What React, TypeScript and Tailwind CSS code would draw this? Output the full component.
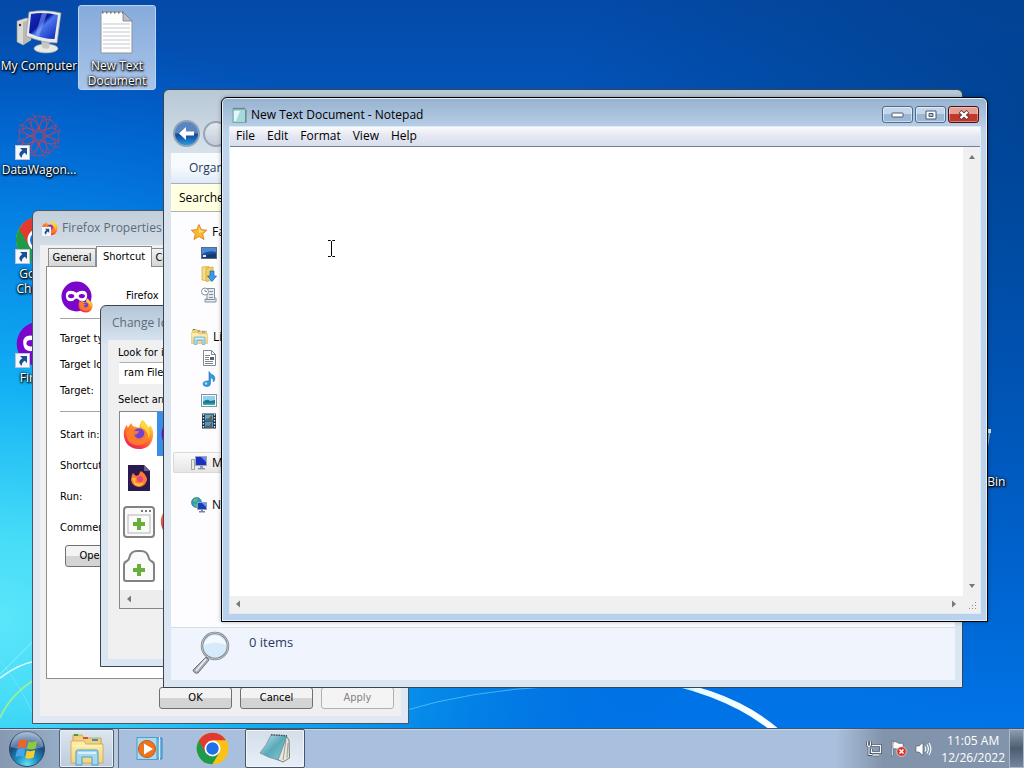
import React from "react";

const ui = "font-['Open_Sans','Noto_Sans',sans-serif]";
const dlg = "font-['DejaVu_Sans_Condensed','Noto_Sans',sans-serif]";

/* ---------- drawings ---------- */

function Wallpaper() {
  return (
    <svg className="absolute inset-0 h-full w-full" viewBox="0 0 1024 768" preserveAspectRatio="none" aria-hidden="true">
      <defs>
        <linearGradient id="sky" x1="0" y1="0" x2="0" y2="1">
          <stop offset="0" stopColor="#054aa8" />
          <stop offset="0.2" stopColor="#005ac4" />
          <stop offset="0.55" stopColor="#0066d8" />
          <stop offset="1" stopColor="#0076ea" />
        </linearGradient>
        <radialGradient id="glow" gradientUnits="userSpaceOnUse" cx="0" cy="0" r="1" gradientTransform="translate(0 620) scale(680 590)">
          <stop offset="0" stopColor="#5be6fa" />
          <stop offset="0.14" stopColor="#46dcf8" />
          <stop offset="0.4" stopColor="#12b0f4" />
          <stop offset="0.68" stopColor="#0588e8" stopOpacity="0.85" />
          <stop offset="1" stopColor="#0068dc" stopOpacity="0" />
        </radialGradient>
        <radialGradient id="shade" gradientUnits="userSpaceOnUse" cx="0" cy="0" r="1" gradientTransform="translate(1024 130) scale(460 600)">
          <stop offset="0" stopColor="#003e88" stopOpacity="0.75" />
          <stop offset="1" stopColor="#003e88" stopOpacity="0" />
        </radialGradient>
        <linearGradient id="arc" x1="0" y1="0" x2="1" y2="0">
          <stop offset="0" stopColor="#bff2ff" stopOpacity="0" />
          <stop offset="0.4" stopColor="#e8fbff" />
          <stop offset="1" stopColor="#ffffff" />
        </linearGradient>
      </defs>
      <rect width="1024" height="768" fill="url(#sky)" />
      <rect width="1024" height="768" fill="url(#shade)" />
      <rect width="1024" height="768" fill="url(#glow)" />
      <path d="M640 676 Q730 686 780 730 L770 730 Q722 692 640 679Z" fill="url(#arc)" />
      <path d="M400 712 Q470 690 560 686" fill="none" stroke="#6fd6ff" strokeOpacity="0.6" />
      <path d="M0 678 Q18 664 36 661" fill="none" stroke="#d8fbff" strokeWidth="1.6" />
      <path d="M0 674 Q20 655 34 640" fill="none" stroke="#b8f4ff" strokeOpacity="0.7" />
      <path d="M0 718 Q10 695 34 680" fill="none" stroke="#9ff08e" strokeWidth="1.6" />
      <path d="M0 660 Q20 685 34 716" fill="none" stroke="#8eeaff" strokeOpacity="0.5" />
    </svg>
  );
}

function ComputerIcon() {
  return (
    <svg width="48" height="44" viewBox="0 0 48 44" aria-hidden="true">
      <defs>
        <linearGradient id="scr" x1="0" y1="0" x2="1" y2="1">
          <stop offset="0" stopColor="#1a2fc0" />
          <stop offset="0.4" stopColor="#0a18a0" />
          <stop offset="0.5" stopColor="#4a78ee" />
          <stop offset="1" stopColor="#0a20b8" />
        </linearGradient>
      </defs>
      <path d="M2 11 L11 8 L16 9 V30 L8 35 L2 32Z" fill="#d9dad6" stroke="#8e908c" strokeWidth="0.6" />
      <path d="M8 12 L16 9 V30 L8 35Z" fill="#b9bab6" />
      <circle cx="5" cy="15" r="1.2" fill="#333" />
      <ellipse cx="31" cy="38.500" rx="12" ry="4.5" fill="#e8e9e6" stroke="#9a9c98" strokeWidth="0.7" />
      <path d="M26 28 L35 30 L34 38 Q30 40 27 37Z" fill="#c6c7c3" />
      <path d="M14 2 Q30 -1 46 3 L42 33 Q28 33 11 26Z" fill="#e9eae8" stroke="#989a97" strokeWidth="0.7" />
      <path d="M16 4 Q29 1.5 43 5 L39.500 29 Q27 29 14 23Z" fill="url(#scr)" />
      <path d="M27 3 L32 3 L24 27 L20 26Z" fill="#8db0ff" opacity="0.5" />
    </svg>
  );
}

function TextFileIcon() {
  return (
    <svg width="36" height="46" viewBox="0 0 36 46" aria-hidden="true">
      <path d="M2 3 H24 L33 12 V44 H2Z" fill="#fdfdfd" stroke="#8f9499" />
      <path d="M24 3 V12 H33Z" fill="#b9bfc6" stroke="#777c82" strokeWidth="0.8" />
      <path d="M3 3.500 H24" stroke="#6a7077" strokeWidth="2" strokeDasharray="1.500 2.500" />
      {[15, 19, 23, 27, 31, 35, 39].map((y) => (
        <path key={y} d={`M4 ${y}H31`} stroke="#c3c8ce" strokeWidth="1" />
      ))}
    </svg>
  );
}

function ShortcutArrow() {
  return (
    <svg className="absolute bottom-0 left-0" width="15" height="15" viewBox="0 0 15 15" aria-hidden="true">
      <rect x="0.500" y="0.500" width="14" height="14" fill="#f4f8fc" stroke="#b9c4d0" />
      <path d="M5 3 H12 V10 L9.700 7.700 Q6.500 9.500 6.800 13 Q1.500 9 7.300 5.300Z" fill="#1b5191" />
    </svg>
  );
}

function WagonIcon() {
  return (
    <svg width="48" height="48" viewBox="0 0 48 48" fill="none" stroke="#e23a4c" strokeWidth="0.8" opacity="0.85" aria-hidden="true">
      {[0, 45, 90, 135, 180, 225, 270, 315].map((a) => (
        <g key={a} transform={`rotate(${a} 24 24)`}>
          <circle cx="24" cy="12" r="8" />
          <path d="M24 17 L29 2 M24 17 L19 2 M19 2 L14 7" strokeDasharray="3 1" />
        </g>
      ))}
      <circle cx="24" cy="24" r="7" />
    </svg>
  );
}

function ChromeIcon({ size }: { size: number }) {
  return (
    <svg width={size} height={size} viewBox="0 0 48 48" aria-hidden="true">
      <circle cx="24" cy="24" r="23" fill="#fbc116" />
      <path d="M24 24 L4.080 12.500 A23 23 0 0 0 24 47 L34 30Z" fill="#1f9a4c" />
      <path d="M4.080 12.500 A23 23 0 0 1 43.920 12.500 H24 L14 30Z" fill="#e03b2e" />
      <path d="M24 12.500 H43.920 A23 23 0 0 1 24 47 L34 30Z" fill="#fbc116" />
      <circle cx="24" cy="24" r="11.500" fill="#fff" />
      <circle cx="24" cy="24" r="9" fill="#1f6fe5" />
    </svg>
  );
}

function FirefoxIcon({ size, id }: { size: number; id: string }) {
  return (
    <svg width={size} height={size} viewBox="0 0 32 32" aria-hidden="true">
      <defs>
        <linearGradient id={id} x1="0.8" y1="0" x2="0.2" y2="1">
          <stop offset="0" stopColor="#fff04a" />
          <stop offset="0.35" stopColor="#ff9a2a" />
          <stop offset="0.7" stopColor="#ff4a3a" />
          <stop offset="1" stopColor="#e01a70" />
        </linearGradient>
      </defs>
      <path d="M20 1 Q25 5 26 9 Q28 8 28 6 Q32 12 31 18 Q29 31 16 31 Q3 30 1 18 Q0 11 4 6 L5 9 Q7 5 9 4 Q9 7 12 8 L17 9 Q17 4 20 1Z" fill={`url(#${id})`} />
      <circle cx="16.500" cy="16" r="6.500" fill="#7340d6" />
      <path d="M3 13 Q8 9 12 12 Q15 12 17 13 Q15 16 12 16.500 Q13 20 17 20 Q22 19 22 14 Q21 11 19 9 Q27 11 26 19 Q24 27 16 27 Q6 27 4 19Z" fill="#ff8226" opacity="0.85" />
      <path d="M20 1 Q25 5 26 10 Q29 15 26 20 Q27 13 20 9 Q16 6 20 1Z" fill="#ffd83c" />
    </svg>
  );
}

function MaskIcon({ size, badge, id }: { size: number; badge?: boolean; id: string }) {
  return (
    <span className="relative block">
      <svg width={size} height={size} viewBox="0 0 32 32" aria-hidden="true">
        <circle cx="16" cy="16" r="15.500" fill="#7a06cc" />
        <path d="M5 15 Q5 10 10 10 Q13 10 16 12 Q19 10 22 10 Q27 10 27 15 Q27 21 22 21 Q19 21 17.500 18.500 Q16 17.500 14.500 18.500 Q13 21 10 21 Q5 21 5 15Z" fill="#fff" />
        <ellipse cx="10.500" cy="15.500" rx="3.200" ry="2.200" fill="#7a06cc" />
        <ellipse cx="21.500" cy="15.500" rx="3.200" ry="2.200" fill="#7a06cc" />
      </svg>
      {badge && (
        <span className="absolute -right-px -bottom-px">
          <FirefoxIcon size={15} id={id} />
        </span>
      )}
    </span>
  );
}

function PrivateFileIcon() {
  return (
    <svg width="24" height="28" viewBox="0 0 24 28" aria-hidden="true">
      <path d="M1 1 H17 L23 7 V27 H1Z" fill="#2a1a50" />
      <path d="M17 1 L23 7 H17Z" fill="#6d5c98" />
      <path d="M14 7 Q20 11 20 16 Q18 23 12 23 Q5 22 4 16 Q4 12 6 9 L9 12 L12 11 Q12 9 14 7Z" fill="#ff7a2c" />
      <path d="M5 14 L9 14 L8 18 Q12 21 17 18 Q14 24 8 21Z" fill="#ffc43a" />
      <circle cx="13" cy="15" r="3" fill="#e8408a" />
    </svg>
  );
}

function NewWindowIcon() {
  return (
    <svg width="32" height="32" viewBox="0 0 32 32" fill="none" aria-hidden="true">
      <rect x="1" y="1" width="30" height="30" rx="3" fill="#fafafa" stroke="#828282" strokeWidth="2" />
      <path d="M18 5h2M22 5h2M26 5h2" stroke="#777" strokeWidth="2" />
      <rect x="5" y="9" width="22" height="18" stroke="#b4b4b4" />
      <path d="M16 12v12M10 18h12" stroke="#69ad3a" strokeWidth="4" />
    </svg>
  );
}

function NewTabIcon() {
  return (
    <svg width="32" height="32" viewBox="0 0 32 32" fill="none" aria-hidden="true">
      <path d="M1 29 V15 Q1 12 4 11 Q6 10 6.500 7 Q8 1 14 1 H18 Q24 1 25.500 7 Q26 10 28 11 Q31 12 31 15 V29 Q31 31 29 31 H3 Q1 31 1 29Z" fill="#fafafa" stroke="#828282" strokeWidth="2" />
      <path d="M16 14v12M10 20h12" stroke="#69ad3a" strokeWidth="4" />
    </svg>
  );
}

function StarIcon() {
  return (
    <svg width="16" height="16" viewBox="0 0 16 16" aria-hidden="true">
      <path d="M8 0.500 L10.300 5.600 L15.700 6.200 L11.700 9.900 L13 15.500 L8 12.500 L3 15.500 L4.300 9.900 L0.300 6.200 L5.700 5.600Z" fill="#fdb92c" stroke="#d6761c" strokeWidth="0.8" />
      <path d="M8 3 L9.500 6.600 L13 7 L8 9Z" fill="#ffe27a" />
    </svg>
  );
}

function DesktopIcon() {
  return (
    <svg width="16" height="16" viewBox="0 0 16 16" aria-hidden="true">
      <rect x="0.500" y="2.500" width="15" height="11" fill="#1d50a0" stroke="#5c6b80" />
      <path d="M1 3 H15 V7 Q8 5 1 9Z" fill="#4b8bd8" />
      <path d="M1 13 Q7 8 15 9 V13Z" fill="#173a6a" />
      <path d="M2 10h3v2H2z" fill="#d9ecff" />
    </svg>
  );
}

function DownloadsIcon() {
  return (
    <svg width="16" height="16" viewBox="0 0 16 16" aria-hidden="true">
      <path d="M1 1 L8 0.500 V15 L1 14Z" fill="#f8dd7c" stroke="#c9a545" strokeWidth="0.7" />
      <path d="M5 2 L12 1 V14 L5 15.500Z" fill="#f3cf60" stroke="#c9a545" strokeWidth="0.7" />
      <path d="M9 5 H13 V10 H15.500 L11 15.500 L6.500 10 H9Z" fill="#3c9be8" stroke="#1a62b4" strokeWidth="0.7" />
    </svg>
  );
}

function RecentIcon() {
  return (
    <svg width="16" height="16" viewBox="0 0 16 16" fill="none" stroke="#83909c" aria-hidden="true">
      <path d="M6 1.500 H13.500 V11 H15 V15 H4 V12 H6Z" fill="#e6eaee" />
      <circle cx="4" cy="4.500" r="3.500" fill="#fff" />
      <path d="M4 2.500 V4.500 H6 M8.500 4.500 H12 M8 7.500 H12 M8 10.500 H12 M5 12.500 H14" />
    </svg>
  );
}

function LibraryIcon({ size }: { size: number }) {
  return (
    <svg width={size} height={size} viewBox="0 0 34 34" aria-hidden="true">
      <defs>
        <linearGradient id="fold" x1="0" y1="0" x2="0" y2="1">
          <stop offset="0" stopColor="#fff0a8" />
          <stop offset="1" stopColor="#f2d47c" />
        </linearGradient>
      </defs>
      <path d="M3 6 V3 H12 L14 6 H31 V24 H3Z" fill="#f0d27e" stroke="#c29a45" strokeWidth="0.8" />
      <path d="M4 2h4v2H4z" fill="#3f9c4a" />
      <path d="M13 5h5v2h-5z" fill="#d3532a" />
      <path d="M22 7h6v2h-6z" fill="#3c8ad0" />
      <path d="M1 9 H14 L16 12 H33 V31 H1Z" fill="url(#fold)" stroke="#cfa34c" strokeWidth="0.8" />
      <path d="M3 14 H31" stroke="#fff8d8" />
      <path d="M6 33 V20 Q6 18 8 18 H26 Q28 18 28 20 V33 H22 V25 H12 V33Z" fill="#a4d8f2" stroke="#4d9cc8" strokeWidth="1" />
      <path d="M8 21 H26" stroke="#e9faff" strokeWidth="1.5" />
    </svg>
  );
}

function DocumentIcon() {
  return (
    <svg width="16" height="16" viewBox="0 0 16 16" fill="none" aria-hidden="true">
      <path d="M2.500 0.500 H10.500 L14.500 4.500 V15.500 H2.500Z" fill="#fff" stroke="#80878f" />
      <path d="M10.500 0.500 V4.500 H14.500 M4 5.500 H9 M4 7.500 H8 M4 9.500 H8 M4 11.500 H12 M4 13.500 H12" stroke="#7d858d" />
      <path d="M9 7h4v3H9z" fill="#56616d" />
    </svg>
  );
}

function MusicIcon() {
  return (
    <svg width="16" height="16" viewBox="0 0 16 16" aria-hidden="true">
      <path d="M8 0.500 Q9 3 12 4 Q15.500 7 12.500 11 Q13 7.500 9.500 6.500 V12 Q9.500 15.500 6 15.500 Q2 15.500 2 12.800 Q2.500 9.500 8 10Z" fill="#2f9bdc" stroke="#1a6fb0" strokeWidth="0.6" />
      <circle cx="5" cy="12.500" r="1.200" fill="#a9e0ff" />
    </svg>
  );
}

function PictureIcon() {
  return (
    <svg width="16" height="16" viewBox="0 0 16 16" aria-hidden="true">
      <rect x="0.500" y="2.500" width="15" height="12" fill="#fff" stroke="#7c95a8" />
      <rect x="2" y="4" width="12" height="9" fill="#8fd2ee" />
      <path d="M2 10 Q6 6 9 9 L14 8 V13 H2Z" fill="#1f7a90" />
      <path d="M2 11.500 H14 V13 H2Z" fill="#35b0b4" />
    </svg>
  );
}

function VideoIcon() {
  return (
    <svg width="16" height="16" viewBox="0 0 16 16" aria-hidden="true">
      <rect x="1" y="0.500" width="14" height="15" fill="#20303c" />
      <path d="M2.500 1 V15 M13.500 1 V15" stroke="#dfe8ee" strokeWidth="1.400" strokeDasharray="1.500 1.500" />
      <path d="M4 1.500h8v6H4z" fill="#58a8d4" />
      <path d="M4 8.500h8v6H4z" fill="#4898c8" />
      <path d="M5 5 L7 6 L11 2 V7 H5Z M5 12 L8 13 L11 9 V14 H5Z" fill="#6f5a48" />
    </svg>
  );
}

function SmallComputerIcon() {
  return (
    <svg width="16" height="16" viewBox="0 0 16 16" aria-hidden="true">
      <path d="M0.500 4.500 H3.500 V14.500 H0.500Z" fill="#e5e7e8" stroke="#8b9197" strokeWidth="0.8" />
      <rect x="4.500" y="1.500" width="11" height="9" fill="#1a2ec0" stroke="#a0a8b8" />
      <path d="M10 2 H15 V7Z" fill="#6a8cf0" />
      <path d="M9 11 h3 v2 h2 v1.500 H7 V13 h2z" fill="#9098a4" />
    </svg>
  );
}

function NetworkIcon() {
  return (
    <svg width="16" height="16" viewBox="0 0 16 16" aria-hidden="true">
      <circle cx="5.500" cy="5.500" r="5" fill="#2c9bd0" stroke="#1a5c94" strokeWidth="0.6" />
      <path d="M2 3 Q5 0 7 2 Q6 5 3 5Z M3 7 Q6 6 6 10 Q3 9 3 7Z" fill="#63c255" />
      <rect x="6.500" y="5.500" width="9" height="7" fill="#1a3ac0" stroke="#8fa0b8" />
      <path d="M11 6 H15 V10Z" fill="#6d94f4" />
      <path d="M10 13 h2 v1 h2 v1.500 H8 V14 h2z" fill="#7c8590" />
    </svg>
  );
}

function MagnifierIcon() {
  return (
    <svg width="40" height="44" viewBox="0 0 40 44" aria-hidden="true">
      <path d="M15 26 L18 29 L7 42 Q3 43 2 39Z" fill="#a8acb0" stroke="#73777b" />
      <path d="M15 28 L5 40" stroke="#f1f3f4" strokeWidth="1.500" />
      <circle cx="24" cy="15" r="13" fill="#d5ebfb" stroke="#7b8086" strokeWidth="2.500" />
      <circle cx="24" cy="15" r="13.200" fill="none" stroke="#d8dcdf" strokeWidth="0.8" />
      <path d="M13 14 Q15 5 24 4 Q33 5 35 14 Q24 9 13 14Z" fill="#f2f9ff" />
    </svg>
  );
}

function NotepadSmallIcon() {
  return (
    <svg width="16" height="16" viewBox="0 0 16 16" aria-hidden="true">
      <rect x="1" y="2" width="12.500" height="13.500" fill="#a5dadd" stroke="#6c9ca2" strokeWidth="0.8" />
      <path d="M2 4 H8 L4 14 H2Z" fill="#e2f7f6" />
      <path d="M1.500 1.500 H13.500" stroke="#49636b" strokeWidth="1.500" strokeDasharray="1 1" />
      <path d="M14 3 V15.500" stroke="#4f6c70" strokeWidth="0.8" />
    </svg>
  );
}

function NotepadLargeIcon() {
  return (
    <svg width="32" height="32" viewBox="0 0 32 32" aria-hidden="true">
      <defs>
        <linearGradient id="npd" x1="0" y1="0" x2="1" y2="1">
          <stop offset="0" stopColor="#c4eaf0" />
          <stop offset="0.5" stopColor="#5ba9ba" />
          <stop offset="1" stopColor="#8accd0" />
        </linearGradient>
      </defs>
      <path d="M27 3 L30 7 L30.500 25 L24 29 L17 26Z" fill="#e8e6da" stroke="#5d6258" strokeWidth="0.8" />
      <path d="M27 7 L24 27 M29 10 L28 25" stroke="#8d9183" strokeWidth="0.8" />
      <path d="M12 2 L28 3 Q24 14 19 27 Q10 25 1 20 Q8 12 12 2Z" fill="url(#npd)" stroke="#4d7c84" strokeWidth="0.6" />
      <path d="M12 1.700 L28 2.700" stroke="#3f5458" strokeWidth="1.300" strokeDasharray="1.500 1" />
    </svg>
  );
}

function MediaPlayerIcon() {
  return (
    <svg width="28" height="26" viewBox="0 0 28 26" aria-hidden="true">
      <path d="M15 2 H26 V23 H15Z" fill="#6cb8e2" stroke="#4284b2" />
      <path d="M23.500 1 V24" stroke="#d9f1fc" />
      <rect x="1" y="1.500" width="20" height="22" fill="#a8daf0" stroke="#579cc4" />
      <circle cx="11" cy="13" r="8.500" fill="#ee7420" stroke="#c8560f" />
      <path d="M8 7.500 L17 13 L8 18.500Z" fill="#fff" />
    </svg>
  );
}

function StartOrb() {
  return (
    <svg width="38" height="38" viewBox="0 0 38 38" aria-hidden="true">
      <defs>
        <radialGradient id="orb" cx="0.5" cy="0.95" r="0.9">
          <stop offset="0" stopColor="#5fe6fa" />
          <stop offset="0.35" stopColor="#1c8fc0" />
          <stop offset="0.7" stopColor="#1c4a7c" />
          <stop offset="1" stopColor="#7f9fc0" />
        </radialGradient>
      </defs>
      <circle cx="19" cy="19" r="17.500" fill="url(#orb)" stroke="#2a4868" />
      <path d="M3 17 A16 16 0 0 1 35 17 Q19 22 3 17Z" fill="#fff" opacity="0.28" />
      <path d="M11 10.500 Q15 8.500 19 10.500 L17.500 18 Q13.500 16.500 9.500 18Z" fill="#f0622a" />
      <path d="M20.500 11.500 Q24.500 13 29 11 L27.500 18.500 Q23.500 20.500 19 18.800Z" fill="#8fc93c" />
      <path d="M9 19.700 Q13 18 17.200 19.700 L15.700 27 Q11.700 25.500 7.500 27Z" fill="#44a5ea" />
      <path d="M18.700 20.500 Q23 22 27.200 20 L25.700 27.500 Q21.500 29.500 17.200 28Z" fill="#fcca2e" />
    </svg>
  );
}

function RecycleBinIcon() {
  return (
    <svg width="44" height="50" viewBox="0 0 44 50" aria-hidden="true">
      <path d="M6 8 L38 8 L32 46 L12 46Z" fill="#c6dcee" fillOpacity="0.35" stroke="#dcebf6" strokeOpacity="0.6" />
      <path d="M5 6 H39 V10 H5Z" fill="#d5e3ee" />
    </svg>
  );
}

function TrayNetworkIcon() {
  return (
    <svg width="16" height="16" viewBox="0 0 16 16" fill="none" aria-hidden="true">
      <path d="M5.500 4.500 H14.500 V11.500 H5.500 V8 M7 14 H13" stroke="#2c3a4a" strokeWidth="2.600" />
      <path d="M5.500 4.500 H14.500 V11.500 H5.500 V8 M7 14 H13" stroke="#f4f7fa" strokeWidth="1.400" />
      <path d="M1.500 0.500 V3 Q1.500 5.500 3 5.500 Q4.500 5.500 4.500 3 V0.500 M3 5.500 V13.500 H6" stroke="#2c3a4a" strokeWidth="2.400" />
      <path d="M1.500 0.500 V3 Q1.500 5.500 3 5.500 Q4.500 5.500 4.500 3 V0.500 M3 5.500 V13.500 H6" stroke="#f4f7fa" strokeWidth="1.200" />
    </svg>
  );
}

function TrayFlagIcon() {
  return (
    <svg width="17" height="17" viewBox="0 0 17 17" aria-hidden="true">
      <path d="M1.500 1 V16 H3 V1Z" fill="#fff" stroke="#3d4b5b" strokeWidth="0.5" />
      <path d="M3 2 Q6 1 8 3 Q10 4 13 3 V10 Q10 11 8 9.500 Q6 8 3 9Z" fill="#fff" stroke="#3d4b5b" strokeWidth="0.5" />
      <circle cx="11.500" cy="11.500" r="4.800" fill="#d8322a" stroke="#fff" strokeWidth="0.6" />
      <path d="M9.500 9.500 L13.500 13.500 M13.500 9.500 L9.500 13.500" stroke="#fff" strokeWidth="1.500" />
    </svg>
  );
}

function TraySpeakerIcon() {
  return (
    <svg width="17" height="16" viewBox="0 0 17 16" fill="none" aria-hidden="true">
      <path d="M1 5 H4 L8 1.500 V14.500 L4 11 H1Z" fill="#fff" stroke="#44525f" strokeWidth="0.6" />
      <path d="M10 5.500 Q11.500 8 10 10.500 M12 3.500 Q14.800 8 12 12.500 M14 2 Q17.800 8 14 14" stroke="#fff" strokeWidth="1.100" />
    </svg>
  );
}

function Triangle({ dir }: { dir: "up" | "down" | "left" | "right" }) {
  const d = { up: "M1 6L4 2L7 6Z", down: "M1 2L4 6L7 2Z", left: "M6 0.500L2 4L6 7.500Z", right: "M2 0.500L6 4L2 7.500Z" }[dir];
  return (
    <svg width="8" height="8" viewBox="0 0 8 8" aria-hidden="true">
      <path d={d} fill="#74787c" />
    </svg>
  );
}

/* ---------- desktop ---------- */

type ShortcutProps = { lines: string[]; icon: React.ReactNode; selected?: boolean; link?: boolean };

function DesktopShortcut({ lines, icon, selected, link }: ShortcutProps) {
  return (
    <button
      className={`${ui} flex h-[85px] w-[78px] flex-col items-center rounded-[3px] border pt-[2px] text-xs leading-[15px] text-white [text-shadow:0_1px_2px_#000,1px_1px_2px_#000,0_0_3px_#000] ${
        selected ? "border-[#b9d3f2] bg-linear-to-b from-[#86abdc] to-[#a9c4e8]" : "border-transparent"
      }`}
    >
      <span className="relative mb-[2px] flex h-12 w-12 shrink-0 items-center justify-center">
        {icon}
        {link && <ShortcutArrow />}
      </span>
      {lines.map((l) => (
        <span key={l} className="whitespace-nowrap">{l}</span>
      ))}
    </button>
  );
}

/* ---------- properties dialog ---------- */

const pushButton =
  "flex h-[22px] items-center justify-center rounded-[3px] border border-[#707070] bg-linear-to-b from-[#f3f3f3] from-50% to-[#d4d4d4] to-50% text-[11px] text-black";

const backTab = "mb-px flex h-[18px] items-center justify-center border border-b-0 border-[#8c8e94] bg-linear-to-b from-[#f2f2f2] to-[#d6d6d6] pt-[2px]";

function PropertiesWindow() {
  return (
    <section
      aria-label="Firefox Properties"
      className={`${dlg} absolute isolate top-[210px] left-[32px] flex h-[514px] w-[377px] flex-col rounded-t-md border border-[#4b5560] bg-linear-to-b from-[#c2ced9] to-[#dfe8f3] to-[60px] px-[7px] pb-[7px] text-[11px] text-black`}
    >
      <header className="flex h-[34px] shrink-0 items-center gap-1 pl-[2px]">
        <span className="relative block h-4 w-4">
          <FirefoxIcon size={16} id="ffTitle" />
          <svg className="absolute bottom-0 left-0" width="9" height="9" viewBox="0 0 15 15" aria-hidden="true">
            <rect width="15" height="15" fill="#f4f8fc" />
            <path d="M5 3 H12 V10 L9.700 7.700 Q6.500 9.500 6.800 13 Q1.500 9 7.300 5.300Z" fill="#1b5191" />
          </svg>
        </span>
        <h2 className={`${ui} text-xs text-[#5a6b7b]`}>Firefox Properties</h2>
      </header>
      <div className="flex flex-1 flex-col bg-[#f0f0f0] px-[6px] pt-px pb-[7px]">
        <div role="tablist" className="relative z-10 -mb-px flex h-[21px] shrink-0 items-end pl-[2px]">
          <button role="tab" className={`${backTab} w-12`}>General</button>
          <button role="tab" className="flex h-[21px] w-14 items-center justify-center border border-b-0 border-[#8c8e94] bg-white">Shortcut</button>
          <button role="tab" className={`${backTab} w-[74px] border-l-0`}>Compatibility</button>
        </div>
        <div className="flex h-[413px] flex-col border border-[#8c8e94] bg-white px-[13px] pt-3">
          <div className="flex h-[34px] items-center gap-[34px] pl-px">
            <MaskIcon size={31} badge id="ffBadge" />
            <span>Firefox</span>
          </div>
          <div className="mt-[5px] h-px bg-[#a5a5a5]" />
          <div className="mt-[7px] flex flex-col">
            {["Target type:", "Target location:", "Target:"].map((t) => (
              <span key={t} className="flex h-[26px] items-center">{t}</span>
            ))}
          </div>
          <div className="mt-[7px] h-px bg-[#a5a5a5]" />
          <div className="mt-2 flex flex-col">
            {["Start in:", "Shortcut key:", "Run:", "Comment:"].map((t) => (
              <span key={t} className="flex h-[31px] items-center">{t}</span>
            ))}
          </div>
          <button className={`${pushButton} mt-px ml-[5px] w-[120px] shrink-0`}>Open File Location</button>
        </div>
        <div className="mt-2 flex gap-2 pl-[113px]">
          <button className={`${pushButton} w-[73px]`}>OK</button>
          <button className={`${pushButton} w-[73px]`}>Cancel</button>
          <button disabled className="flex h-[22px] w-[73px] items-center justify-center rounded-[3px] border border-[#adb2b5] bg-[#f4f4f4] text-[11px] text-[#838383]">Apply</button>
        </div>
      </div>
    </section>
  );
}

function ChangeIconWindow() {
  const rows: [React.ReactNode, React.ReactNode, boolean][] = [
    [<FirefoxIcon size={31} id="ffA" />, <MaskIcon size={32} id="mA" />, true],
    [<PrivateFileIcon />, null, false],
    [<NewWindowIcon />, <FirefoxIcon size={34} id="ffB" />, false],
    [<NewTabIcon />, null, false],
  ];
  return (
    <section
      aria-label="Change Icon"
      className={`${dlg} absolute top-[305px] left-[100px] flex h-[362px] w-[278px] flex-col rounded-t-md border border-[#3c4650] bg-linear-to-b from-[#b4c6d6] to-[#dbe6f2] to-[40px] px-[7px] pb-[7px] text-[11px] text-black`}
    >
      <header className="flex h-[34px] shrink-0 items-center pl-1">
        <h2 className={`${ui} text-xs text-[#5a6b7b]`}>Change Icon</h2>
      </header>
      <div className="flex flex-1 flex-col bg-[#f0f0f0] px-[10px] pt-[5px]">
        <label htmlFor="iconFile" className="leading-4">Look for icons in this file:</label>
        <input id="iconFile" defaultValue="ram Files\Mozilla Firefox\firefox.exe" className="mt-px ml-px h-[22px] w-[200px] border border-transparent border-t-[#abadb3] bg-white px-1 pb-[2px]" />
        <span className="mt-2 leading-4">Select an icon from the list below:</span>
        <div className="mt-[3px] ml-px flex h-[198px] flex-col border border-[#828790] bg-white">
          {rows.map(([a, b, on], i) => (
            <div key={i} className="flex h-11 shrink-0">
              <span className="flex w-[37px] items-center justify-center">{a}</span>
              <span className={`flex w-10 items-center justify-center ${on ? "bg-[#3a8de8]" : ""}`}>{b}</span>
            </div>
          ))}
          <div className="mt-[2px] flex flex-1 items-center bg-[#ededed] pl-[5px]">
            <Triangle dir="left" />
          </div>
        </div>
      </div>
    </section>
  );
}

/* ---------- explorer ---------- */

type NavItem = { label: string; icon: React.ReactNode; child?: boolean; on?: boolean };

const navGroups: NavItem[][] = [
  [
    { label: "Favorites", icon: <StarIcon /> },
    { label: "Desktop", icon: <DesktopIcon />, child: true },
    { label: "Downloads", icon: <DownloadsIcon />, child: true },
    { label: "Recent Places", icon: <RecentIcon />, child: true },
  ],
  [
    { label: "Libraries", icon: <LibraryIcon size={17} /> },
    { label: "Documents", icon: <DocumentIcon />, child: true },
    { label: "Music", icon: <MusicIcon />, child: true },
    { label: "Pictures", icon: <PictureIcon />, child: true },
    { label: "Videos", icon: <VideoIcon />, child: true },
  ],
  [{ label: "My Computer", icon: <SmallComputerIcon />, on: true }],
  [{ label: "Network", icon: <NetworkIcon /> }],
];

function ExplorerWindow() {
  return (
    <section
      aria-label="Explorer"
      className={`${ui} absolute top-[89px] left-[163px] flex h-[599px] w-[800px] flex-col rounded-t-md border border-[#3a4450] bg-linear-to-b from-[#b7c8d5] via-[#dbe4ed] via-[70px] to-[#dae6f2] px-[7px] pb-[7px] text-xs text-black`}
    >
      <header className="flex h-[63px] shrink-0 items-end gap-[3px] pb-[6px] pl-[2px]">
        <button aria-label="Back" className="flex h-[27px] w-[27px] items-center justify-center rounded-full border-2 border-[#8ea4b9] bg-linear-to-b from-[#5c86c0] from-45% via-[#12479a] via-55% to-[#2c9be0]">
          <svg width="17" height="15" viewBox="0 0 17 15" aria-hidden="true">
            <path d="M1 7.500 L8 1 V5.500 H16 V9.500 H8 V14Z" fill="#fff" />
          </svg>
        </button>
        <button aria-label="Forward" className="h-[26px] w-[26px] rounded-full border-2 border-[#97a4b1] bg-linear-to-b from-[#e4eaf0] to-[#c3cdd8]" />
      </header>
      <div className="flex h-[31px] shrink-0 items-center border-b border-[#a0afc3] bg-linear-to-b from-[#f8fbfe] from-45% to-[#dfe9f5] pl-[18px] text-[#1e395b]">Organize</div>
      <div className="flex h-[28px] shrink-0 items-center border-b border-[#b5b5a4] bg-[#ffffe1] pl-2">Searches might be slow</div>
      <nav className="flex min-h-0 flex-1 flex-col gap-[21px] bg-[#fdfdff] px-[2px] pt-[9px]">
        {navGroups.map((g, i) => (
          <ul key={i}>
            {g.map((n) => (
              <li key={n.label}>
                <a
                  href="#nav"
                  aria-label={n.label}
                  className={`flex h-[21px] items-center gap-[5px] border ${n.child ? "pl-[27px]" : "pl-[17px]"} ${
                    n.on ? "rounded-[2px] border-[#d9d9d9] bg-linear-to-b from-[#fafafa] to-[#e6e6e6]" : "border-transparent"
                  }`}
                >
                  {n.icon}
                  {!n.child && <span>{n.label}</span>}
                </a>
              </li>
            ))}
          </ul>
        ))}
      </nav>
      <footer className="flex h-[53px] shrink-0 gap-[18px] border-t border-[#d4dfee] bg-[#f0f4fd] pt-[3px] pl-5 text-[#2b3a63]">
        <MagnifierIcon />
        <span className="pt-[2px] text-[13px] leading-[18px]">0 items</span>
      </footer>
    </section>
  );
}

/* ---------- notepad ---------- */

const captionButton =
  "flex h-[17px] w-[31px] items-center justify-center rounded-[3px] border border-[#4f6b8e] bg-linear-to-b from-[#c3d6ea] from-50% to-[#9cb8d6] to-50% shadow-[inset_0_0_0_1px_rgba(255,255,255,0.5)]";

function NotepadWindow() {
  return (
    <section
      aria-label="Notepad"
      className={`${ui} absolute top-[97px] left-[221px] flex h-[525px] w-[767px] flex-col rounded-t-md border border-black bg-linear-to-b from-[#96b1cf] via-[#bfd4eb] via-[34px] to-[#b9d1ea] pr-[6px] pb-[7px] pl-[7px] text-xs text-black shadow-[inset_0_0_0_1px_#dff2fc,0_0_4px_rgba(0,0,0,0.3)]`}
    >
      <header className="flex h-7 shrink-0 items-center gap-[3px] pt-[5px] pl-[3px]">
        <NotepadSmallIcon />
        <h1 className="flex-1 text-xs">New Text Document - Notepad</h1>
        <div className="flex gap-[2px] pr-[2px]">
          <button aria-label="Minimize" className={captionButton}>
            <svg width="13" height="7" viewBox="0 0 13 7" aria-hidden="true">
              <rect x="1" y="2" width="11" height="4" rx="0.500" fill="#fff" stroke="#4a5870" />
            </svg>
          </button>
          <button aria-label="Maximize" className={captionButton}>
            <svg width="12" height="10" viewBox="0 0 12 10" aria-hidden="true">
              <path d="M1 1h10v8H1z" fill="#fff" stroke="#4a5870" />
              <path d="M4 3.500h4v3H4z" fill="#a9c0da" stroke="#4a5870" />
            </svg>
          </button>
          <button aria-label="Close" className="flex h-[17px] w-[31px] items-center justify-center rounded-[3px] border border-[#4b1210] bg-linear-to-b from-[#e3a096] from-50% to-[#c1392b] to-50% shadow-[inset_0_0_0_1px_rgba(255,255,255,0.35)]">
            <svg width="12" height="10" viewBox="0 0 12 10" aria-hidden="true">
              <path d="M2 1.500 L10 8.500 M10 1.500 L2 8.500" stroke="#5a3038" strokeWidth="4" />
              <path d="M2.500 1.800 L9.500 8.200 M9.500 1.800 L2.500 8.200" stroke="#fff" strokeWidth="2.400" />
            </svg>
          </button>
        </div>
      </header>
      <div className="flex min-h-0 flex-1 flex-col border border-[#dcebf8] bg-white">
        <div role="menubar" className="flex h-5 shrink-0 items-center border-b border-[#6f809c] bg-linear-to-b from-[#fafbfd] via-[#e4e7f2] via-50% to-[#d9deec] pb-[2px] pl-[6px]">
          {["File", "Edit", "Format", "View", "Help"].map((m) => (
            <button key={m} role="menuitem" className="pr-3 leading-4">{m}</button>
          ))}
        </div>
        <div className="flex min-h-0 flex-1">
          <textarea aria-label="Document text" className="min-w-0 flex-1 resize-none bg-white outline-none" />
          <div className="flex w-[17px] flex-col items-center justify-between bg-[#f0f0f0] pt-[6px] pb-[6px]">
            <Triangle dir="up" />
            <Triangle dir="down" />
          </div>
        </div>
        <div className="flex h-[17px] shrink-0 items-center bg-[#f0f0f0] pb-[2px] pl-1">
          <Triangle dir="left" />
          <span className="flex-1" />
          <Triangle dir="right" />
          <svg className="ml-2" width="14" height="14" viewBox="0 0 14 14" aria-hidden="true">
            <path d="M9 5h1v1h-1zM6 8h1v1H6zM9 8h1v1h-1zM3 11h1v1H3zM6 11h1v1H6zM9 11h1v1h-1z" fill="#8f8f8f" />
          </svg>
        </div>
      </div>
    </section>
  );
}

/* ---------- taskbar ---------- */

const taskItem = "flex h-[39px] items-center justify-center rounded-[2px] border";

function Taskbar() {
  return (
    <footer className={`${ui} relative flex h-10 shrink-0 border-t border-[#3f566f] bg-linear-to-r from-[#8699b1] from-0% via-[#a8bfdd] via-[12%] to-[#a8bfdd] shadow-[inset_0_1px_0_#c6d6e8]`}>
      <button aria-label="Start" className="flex w-[54px] items-center justify-center">
        <StartOrb />
      </button>
      <div className="flex flex-1 pl-[5px]">
        <button aria-label="Explorer" className={`${taskItem} w-[55px] border-[#4e6178] bg-linear-to-b from-[#dde6ee] to-[#bccbdc] shadow-[inset_0_0_0_1px_#e8f0f6]`}>
          <LibraryIcon size={34} />
        </button>
        <span className="w-[5px] border-r border-[#5b6d84] bg-[#b8c9de]" />
        <button aria-label="Media Player" className={`${taskItem} w-[62px] border-transparent`}>
          <MediaPlayerIcon />
        </button>
        <button aria-label="Chrome" className={`${taskItem} w-[62px] border-transparent`}>
          <ChromeIcon size={33} />
        </button>
        <button aria-label="Notepad" className={`${taskItem} ml-[2px] w-[60px] border-[#44566c] bg-linear-to-b from-[#d3deea] to-[#e8eff7] shadow-[inset_0_0_0_1px_#f2f7fb]`}>
          <NotepadLargeIcon />
        </button>
      </div>
      <div className="flex items-center bg-linear-to-r from-transparent to-[#8294ab] to-25% pl-[30px] text-white">
        <div className="flex items-center gap-2">
          <TrayNetworkIcon />
          <TrayFlagIcon />
          <TraySpeakerIcon />
        </div>
        <time className="ml-[9px] pr-1 text-center text-xs leading-[17px] whitespace-nowrap">
          11:05 AM<br />12/26/2022
        </time>
        <button aria-label="Show desktop" className="h-full w-[15px] border border-[#a9b8ca] bg-linear-to-b from-[#8e9cae] via-[#4c5d72] to-[#76869a]" />
      </div>
    </footer>
  );
}

export default function App() {
  return (
    <div className="relative flex h-screen w-full flex-col overflow-hidden bg-[#0068dc]">
      <Wallpaper />
      <main className="relative min-h-0 flex-1">
        <div className="flex pt-[5px]">
          <div className="flex flex-col gap-[19px]">
            <DesktopShortcut lines={["My Computer"]} icon={<ComputerIcon />} />
            <DesktopShortcut lines={["DataWagon..."]} icon={<WagonIcon />} link />
            <DesktopShortcut lines={["Google", "Chrome"]} icon={<ChromeIcon size={48} />} link />
            <DesktopShortcut lines={["Firefox"]} icon={<MaskIcon size={46} id="ffDesk" />} link />
          </div>
          <DesktopShortcut lines={["New Text", "Document"]} icon={<TextFileIcon />} selected />
        </div>
        <div className="absolute top-[421px] left-[935px]">
          <DesktopShortcut lines={["Recycle Bin"]} icon={<RecycleBinIcon />} />
        </div>
        <PropertiesWindow />
        <ChangeIconWindow />
        <ExplorerWindow />
        <NotepadWindow />
        <svg className="pointer-events-none absolute top-[240px] left-[327px]" width="9" height="17" viewBox="0 0 9 17" fill="none" stroke="#000" aria-hidden="true">
          <path d="M1 0.500 H3.500 L4.500 1.500 L5.500 0.500 H8 M4.500 1.500 V15.500 M1 16.500 H3.500 L4.500 15.500 L5.500 16.500 H8" />
        </svg>
      </main>
      <Taskbar />
    </div>
  );
}
